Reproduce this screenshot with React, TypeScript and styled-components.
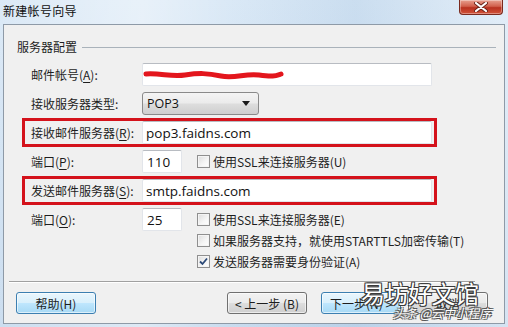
import React from "react";
import styled, { createGlobalStyle } from "styled-components";

const GlobalStyle = createGlobalStyle`
  html, body {
    margin: 0;
    padding: 0;
    background: #ffffff;
  }
  * {
    box-sizing: border-box;
  }
`;

const CJK = `"Noto Sans CJK SC", "Noto Sans", sans-serif`;
const LATIN = `"Open Sans", "Noto Sans", "Noto Sans CJK SC", sans-serif`;

const App = () => {
  return (
    <>
      <GlobalStyle />
      <Window>
        <TitleBar>
          <Title>新建帐号向导</Title>
          <CloseButton>
            <svg width="14" height="10" viewBox="0 0 14 10">
              <path
                d="M2 1 L12 9 M12 1 L2 9"
                stroke="#6a2418"
                strokeWidth="4"
                strokeLinecap="round"
              />
              <path
                d="M2 1 L12 9 M12 1 L2 9"
                stroke="#ffffff"
                strokeWidth="2.2"
                strokeLinecap="round"
              />
            </svg>
          </CloseButton>
        </TitleBar>

        <Body>
          <GroupHeader>
            <GroupTitle>服务器配置</GroupTitle>
            <GroupLine />
          </GroupHeader>

          <Form>
            <Row>
              <Label>
                邮件帐号(<u>A</u>):
              </Label>
              <TextBox>
                <Scribble width="142" height="14" viewBox="0 0 142 14">
                  <path
                    d="M3 6 C 18 5, 28 9, 42 7 S 64 5, 78 8 S 102 5, 116 7 S 132 8, 138 6"
                    stroke="#e3161d"
                    strokeWidth="5"
                    fill="none"
                    strokeLinecap="round"
                  />
                </Scribble>
              </TextBox>
            </Row>

            <Row>
              <Label>接收服务器类型:</Label>
              <Select>
                <span>POP3</span>
                <svg width="8" height="5" viewBox="0 0 8 5">
                  <path d="M0 0 L8 0 L4 5 Z" fill="#1a1a1a" />
                </svg>
              </Select>
            </Row>

            <Row $highlight>
              <Label>
                接收邮件服务器(<u>R</u>):
              </Label>
              <TextBox>pop3.faidns.com</TextBox>
            </Row>

            <Row>
              <Label>
                端口(<u>P</u>):
              </Label>
              <PortBox>110</PortBox>
              <Check>
                <Box />
                使用SSL来连接服务器(U)
              </Check>
            </Row>

            <Row $highlight>
              <Label>
                发送邮件服务器(<u>S</u>):
              </Label>
              <TextBox>smtp.faidns.com</TextBox>
            </Row>

            <Row>
              <Label>
                端口(<u>O</u>):
              </Label>
              <PortBox>25</PortBox>
              <Check>
                <Box />
                使用SSL来连接服务器(E)
              </Check>
            </Row>

            <CheckRow $first>
              <Check>
                <Box />
                如果服务器支持，就使用STARTTLS加密传输(T)
              </Check>
            </CheckRow>

            <CheckRow>
              <Check>
                <Box>
                  <svg width="9" height="9" viewBox="0 0 9 9">
                    <path
                      d="M1 4.5 L3.5 7 L8 1.5"
                      stroke="#2c4a78"
                      strokeWidth="1.8"
                      fill="none"
                    />
                  </svg>
                </Box>
                发送服务器需要身份验证(A)
              </Check>
            </CheckRow>
          </Form>

          <Separator />

          <Footer>
            <Button $blue>帮助(H)</Button>
            <NavButtons>
              <Button>&lt; 上一步 (B)</Button>
              <Button $blue>下一步(N) &gt;</Button>
              <Button>取消</Button>
            </NavButtons>
          </Footer>
        </Body>

        <WatermarkBig>易坊好文馆</WatermarkBig>
        <WatermarkSmall>头条 @云中小程序</WatermarkSmall>
      </Window>
    </>
  );
};

export default App;

const Window = styled.div`
  position: relative;
  width: 508px;
  height: 327px;
  overflow: hidden;
  display: flex;
  flex-direction: column;
  background: linear-gradient(
      90deg,
      rgba(255, 255, 255, 0.15) 0%,
      rgba(255, 255, 255, 0.45) 28%,
      rgba(255, 255, 255, 0.1) 45%,
      rgba(120, 160, 200, 0.12) 70%,
      rgba(255, 255, 255, 0.3) 100%
    ),
    linear-gradient(180deg, #d6e6f5 0%, #c3d8ed 100%);
`;

const TitleBar = styled.div`
  height: 24px;
  display: flex;
  align-items: flex-start;
  justify-content: space-between;
  padding: 0 5px 0 3px;
`;

const Title = styled.div`
  font-family: ${CJK};
  font-size: 12px;
  line-height: 14px;
  margin-top: 4px;
  color: #111111;
  letter-spacing: 0.3px;
`;

const CloseButton = styled.div`
  width: 44px;
  height: 15px;
  display: flex;
  align-items: center;
  justify-content: center;
  border: 1px solid #7a2a1e;
  border-top: none;
  border-radius: 0 0 4px 4px;
  background: linear-gradient(180deg, #e7a08f 0%, #d1604c 45%, #b8311f 55%, #d2543a 100%);
  box-shadow: inset 0 0 0 1px rgba(255, 255, 255, 0.35);
`;

const Body = styled.div`
  margin: 0 3px 0 3px;
  height: 300px;
  border: 1px solid #8e9aa7;
  background: #f0f0f0;
  display: flex;
  flex-direction: column;
`;

const GroupHeader = styled.div`
  display: flex;
  align-items: center;
  height: 14px;
  margin: 15px 8px 0 13px;
`;

const GroupTitle = styled.span`
  font-family: ${CJK};
  font-size: 12px;
  line-height: 14px;
  color: #1e1e1e;
`;

const GroupLine = styled.div`
  flex: 1;
  height: 1px;
  margin-left: 5px;
  background: #a9b2ba;
`;

const Form = styled.div`
  display: flex;
  flex-direction: column;
  gap: 6px;
  margin-top: 9px;
  margin-left: 21px;
`;

const Row = styled.div<{ $highlight?: boolean }>`
  width: 409px;
  height: 23px;
  display: flex;
  align-items: center;
  padding-left: 6px;
  outline: ${(p) => (p.$highlight ? "3px solid #d4121b" : "none")};
`;

const Label = styled.div`
  width: 111px;
  flex-shrink: 0;
  font-family: ${CJK};
  font-size: 12px;
  color: #1e1e1e;
  white-space: nowrap;

  u {
    text-underline-offset: 2px;
  }
`;

const TextBox = styled.div`
  position: relative;
  width: 290px;
  height: 23px;
  display: flex;
  align-items: center;
  padding-left: 3px;
  background: #ffffff;
  border: 1px solid #e2e5ea;
  border-top-color: #b8bcc2;
  border-radius: 2px;
  font-family: ${LATIN};
  font-size: 13.5px;
  color: #111111;
`;

const PortBox = styled(TextBox)`
  width: 40px;
  padding-left: 4px;
`;

const Scribble = styled.svg`
  position: absolute;
  left: 0;
  top: 4px;
`;

const Select = styled.div`
  width: 117px;
  height: 23px;
  display: flex;
  align-items: center;
  justify-content: space-between;
  padding: 0 8px 0 4px;
  border: 1px solid #8a8a8a;
  border-radius: 3px;
  background: linear-gradient(180deg, #f4f4f4 0%, #ebebeb 48%, #dddddd 52%, #cfcfcf 100%);
  font-family: ${LATIN};
  font-size: 12.5px;
  color: #111111;
`;

const CheckRow = styled.div<{ $first?: boolean }>`
  height: 17px;
  display: flex;
  align-items: center;
  padding-left: 172px;
  margin-top: ${(p) => (p.$first ? "-5px" : "-2px")};
`;

const Check = styled.div`
  display: flex;
  align-items: center;
  gap: 3px;
  margin-left: 15px;
  font-family: ${CJK};
  font-size: 12px;
  color: #1e1e1e;
  white-space: nowrap;

  ${CheckRow} & {
    margin-left: 0;
  }
`;

const Box = styled.span`
  width: 13px;
  height: 13px;
  display: inline-flex;
  align-items: center;
  justify-content: center;
  border: 1px solid #8f8f8f;
  background: linear-gradient(135deg, #dcdcdc 0%, #f6f6f6 60%, #ffffff 100%);
  box-shadow: inset 0 0 0 1px #f4f4f4;
`;

const Separator = styled.div`
  height: 2px;
  margin: 11px 29px 0 5px;
  border-top: 1px solid #a0a0a0;
  border-bottom: 1px solid #ffffff;
`;

const Footer = styled.div`
  display: flex;
  justify-content: space-between;
  margin-top: 9px;
  padding: 0 16px 0 12px;
`;

const NavButtons = styled.div`
  display: flex;
  gap: 14px;

  & > *:last-child {
    margin-left: -7px;
  }
`;

const Button = styled.div<{ $blue?: boolean }>`
  width: 80px;
  height: 22px;
  display: flex;
  align-items: center;
  justify-content: center;
  border-radius: 3px;
  border: 1px solid ${(p) => (p.$blue ? "#3c7fb1" : "#707070")};
  background: ${(p) =>
    p.$blue
      ? "linear-gradient(180deg, #eaf6fd 0%, #d9f0fc 48%, #bee6fd 52%, #a7d9f5 100%)"
      : "linear-gradient(180deg, #f2f2f2 0%, #ebebeb 48%, #dddddd 52%, #cfcfcf 100%)"};
  box-shadow: inset 0 0 0 1px rgba(255, 255, 255, 0.6);
  font-family: ${CJK};
  font-size: 12px;
  color: #1e1e1e;
  white-space: nowrap;
`;

const WatermarkBig = styled.div`
  position: absolute;
  left: 361px;
  top: 278px;
  font-family: ${CJK};
  font-size: 24px;
  line-height: 30px;
  color: #ffffff;
  letter-spacing: -0.5px;
  text-shadow: -1px -1px 0 #3a3a3a, 1px -1px 0 #3a3a3a, -1px 1px 0 #3a3a3a,
    1px 1px 0 #3a3a3a;
`;

const WatermarkSmall = styled.div`
  position: absolute;
  left: 393px;
  top: 305px;
  font-family: ${CJK};
  font-size: 12px;
  line-height: 16px;
  font-style: italic;
  color: #ffffff;
  text-shadow: -1px -1px 0 #555555, 1px -1px 0 #555555, -1px 1px 0 #555555,
    1px 1px 0 #555555;
`;
